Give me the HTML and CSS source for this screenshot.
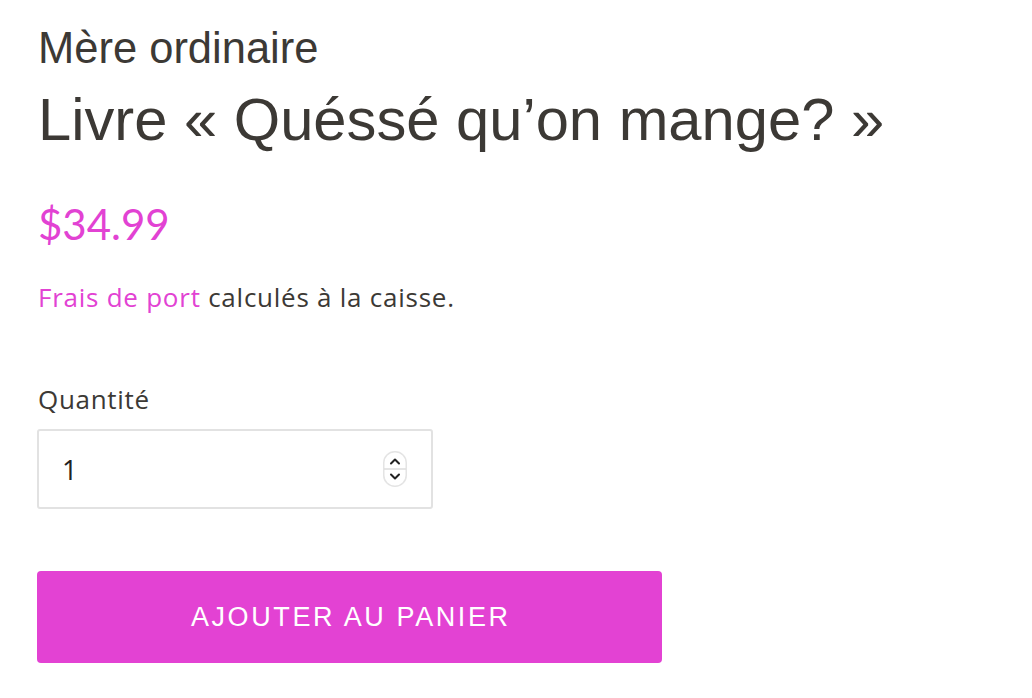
FILE: index.html
```html
<!DOCTYPE html>
<html lang="fr">
<head>
<meta charset="utf-8">
<link rel="stylesheet" href="styles.css">
</head>
<body>
<main class="product">
  <p class="vendor">Mère ordinaire</p>
  <h1 class="title">Livre « Quéssé qu’on mange? »</h1>
  <p class="price">$34.99</p>
  <p class="shipping"><a class="ship-link" href="#">Frais de port</a> calculés à la caisse.</p>
  <label class="qty-label">Quantité</label>
  <div class="qty-box">
    <span class="qty-value">1</span>
    <span class="spinner">
      <svg width="24" height="36" viewBox="0 0 24 36">
        <rect x="0.75" y="0.75" width="22.5" height="34.5" rx="11" fill="#fff" stroke="#e4e4e4" stroke-width="1.5"/>
        <line x1="1" y1="18" x2="23" y2="18" stroke="#dcdcdc" stroke-width="1.5"/>
        <path d="M8 12.5 L12 8.5 L16 12.5" fill="none" stroke="#222" stroke-width="2" stroke-linecap="round" stroke-linejoin="round"/>
        <path d="M8 23.5 L12 27.5 L16 23.5" fill="none" stroke="#222" stroke-width="2" stroke-linecap="round" stroke-linejoin="round"/>
      </svg>
    </span>
  </div>
  <button class="add-btn">AJOUTER AU PANIER</button>
</main>
</body>
</html>
```
FILE: styles.css
```css
html, body {
  margin: 0;
  padding: 0;
  background: #fff;
}
.product {
  padding: 22px 38px 0 38px;
  color: #3c3935;
  font-family: "Liberation Sans", sans-serif;
}
.vendor {
  margin: 0;
  font-size: 43.5px;
  line-height: 52px;
  font-family: "Liberation Sans", sans-serif;
}
.title {
  margin: 10px 0 0 0;
  font-weight: normal;
  font-size: 59.7px;
  line-height: 72px;
  font-family: "Liberation Sans", sans-serif;
}
.price {
  margin: 38px 0 0 0;
  color: #e242d3;
  font-family: "Lato", sans-serif;
  font-size: 42px;
  line-height: 60px;
}
.shipping {
  margin: 27px 0 0 0;
  font-family: "Open Sans", sans-serif;
  font-size: 26px;
  letter-spacing: 0.75px;
  line-height: 32px;
}
.ship-link {
  color: #e242d3;
  text-decoration: none;
}
.qty-label {
  display: block;
  margin-top: 70px;
  font-family: "Open Sans", sans-serif;
  font-size: 26px;
  letter-spacing: 0.7px;
  line-height: 32px;
}
.qty-box {
  margin: 14px 0 0 -1px;
  box-sizing: border-box;
  width: 396px;
  height: 80px;
  border: 2px solid #e2e2e2;
  border-radius: 3px;
  display: flex;
  align-items: center;
  justify-content: space-between;
  padding: 0 24px 0 23px;
}
.qty-value {
  font-family: "Open Sans", sans-serif;
  font-size: 27px;
  color: #222;
}
.spinner {
  display: flex;
}
.add-btn {
  display: block;
  margin: 62px 0 0 -1px;
  width: 625px;
  height: 92px;
  border: none;
  border-radius: 4px;
  background: #e342d3;
  color: #fff;
  font-family: "Liberation Sans", sans-serif;
  font-size: 27px;
  letter-spacing: 2.6px;
  padding: 0 0 0 2.6px;
}
```
